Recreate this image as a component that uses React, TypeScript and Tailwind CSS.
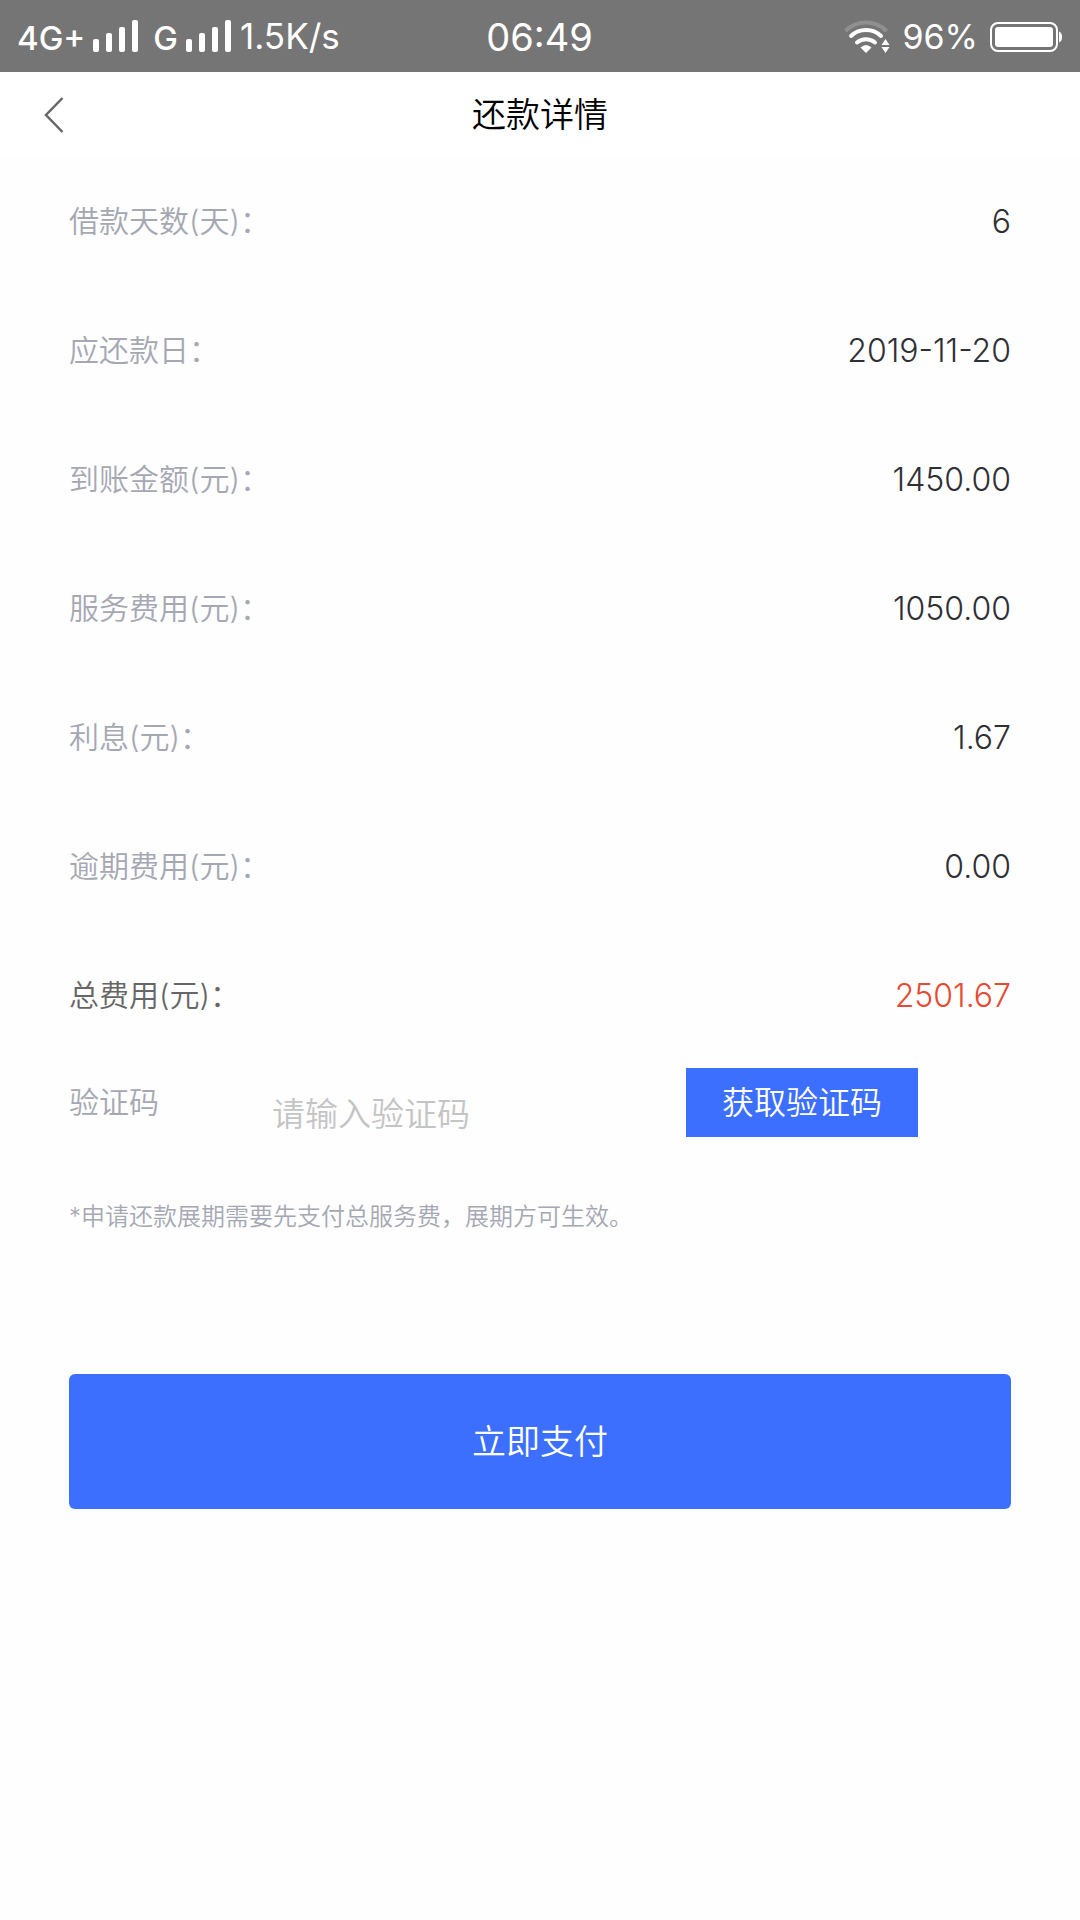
import React, { useState } from 'react';

const rows = [
  { label: '借款天数(天)：', value: '6' },
  { label: '应还款日：', value: '2019-11-20' },
  { label: '到账金额(元)：', value: '1450.00' },
  { label: '服务费用(元)：', value: '1050.00' },
  { label: '利息(元)：', value: '1.67' },
  { label: '逾期费用(元)：', value: '0.00' },
  { label: '总费用(元)：', value: '2501.67', total: true },
];

const SignalBars: React.FC = () => (
  <svg width="46" height="33" viewBox="0 0 46 33" fill="#fff">
    <rect x="0" y="19" width="6" height="13" rx="2" />
    <rect x="13" y="13" width="6" height="19" rx="2" />
    <rect x="26" y="7" width="6" height="25" rx="2" />
    <rect x="39" y="0" width="6" height="32" rx="2" />
  </svg>
);

const WifiIcon: React.FC = () => (
  <svg width="46" height="34" viewBox="0 0 46 34" fill="none" strokeWidth="4">
    <path d="M1.5 11 A29 29 0 0 1 42.5 11" stroke="#8f8f8f" />
    <path d="M7 16 A22 22 0 0 1 37 16" stroke="#fff" strokeLinecap="round" />
    <path d="M13 22.5 A14 14 0 0 1 31 22.5" stroke="#fff" strokeLinecap="round" />
    <path d="M16.5 27.5 Q22 22.5 27.5 27.5 L22 33 Z" fill="#fff" />
    <path d="M37.5 25 L41.5 19 L45.5 25 Z M37.5 27 L45.5 27 L41.5 33 Z" fill="#fff" />
  </svg>
);

const BatteryIcon: React.FC = () => (
  <svg width="72" height="30" viewBox="0 0 72 30" fill="none">
    <rect x="1" y="1" width="66" height="28" rx="7" stroke="#fff" strokeWidth="2" />
    <rect x="5" y="5" width="58" height="20" rx="3" fill="#fff" />
    <path d="M69 9.5 Q72 10.5 72 15 Q72 19.5 69 20.5 Z" fill="#fff" />
  </svg>
);

const StatusBar: React.FC = () => (
  <div className="grid grid-cols-[1fr_auto_1fr] items-center h-[72px] pt-px pl-[17px] pr-[18px] bg-[#757575] text-white">
    <div className="flex items-center gap-2 text-[35px] leading-none">
      <span className="pt-1 text-[33px] font-medium">4G+</span>
      <SignalBars />
      <span className="pt-1 pl-1.5 text-[33px] font-medium">G</span>
      <SignalBars />
      <span>1.5K/s</span>
    </div>
    <div className="text-[38px] leading-none">06:49</div>
    <div className="flex items-center justify-end gap-3 text-[34px] leading-none">
      <WifiIcon />
      <span>96%</span>
      <BatteryIcon />
    </div>
  </div>
);

export default function App() {
  const [code, setCode] = useState('');

  return (
    <div className="min-h-screen bg-[#fefefe] font-[350] font-[Inter,'Noto_Sans_CJK_SC',sans-serif]">
      <div className="font-normal">
        <StatusBar />
      </div>

      <header className="grid grid-cols-[1fr_auto_1fr] items-center h-[85px] px-11 bg-white">
        <button type="button" aria-label="返回" className="justify-self-start">
          <svg width="20" height="36" viewBox="0 0 20 36" fill="none" stroke="#666" strokeWidth="2.5">
            <path d="M18.5 1 L2 18 L18.5 35" />
          </svg>
        </button>
        <h1 className="text-[34px] text-black">还款详情</h1>
      </header>

      <main className="px-[69px]">
        <dl className="font-light">
          {rows.map(r => (
            <div key={r.label} className="flex items-center justify-between h-[129px]">
              <dt className={`text-[30px] font-[350] ${r.total ? 'text-[#666]' : 'text-[#a5a8b3]'}`}>{r.label}</dt>
              <dd className={`text-[32px] ${r.total ? 'text-[#e64a33]' : 'text-[#2f3035]'}`}>{r.value}</dd>
            </div>
          ))}
        </dl>

        <div className="flex items-center pt-2 pr-[93px]">
          <label htmlFor="code" className="w-[203px] text-[30px] text-[#a5a8b3]">验证码</label>
          <input
            id="code"
            type="text"
            value={code}
            onChange={e => setCode(e.target.value)}
            placeholder="请输入验证码"
            className="flex-1 min-w-0 h-[69px] pt-[22px] text-[33px] outline-none placeholder:text-[#c4c4c4]"
          />
          <button type="button" className="h-[69px] px-9 bg-[#3d6fff] text-[32px] text-white">获取验证码</button>
        </div>

        <p className="mt-[62px] text-[24px] leading-9 text-[#a5a8b3]">*申请还款展期需要先支付总服务费，展期方可生效。</p>

        <button type="button" className="w-full h-[135px] mt-[139px] rounded-md bg-[#3d6fff] text-[34px] text-white">
          立即支付
        </button>
      </main>
    </div>
  );
}
